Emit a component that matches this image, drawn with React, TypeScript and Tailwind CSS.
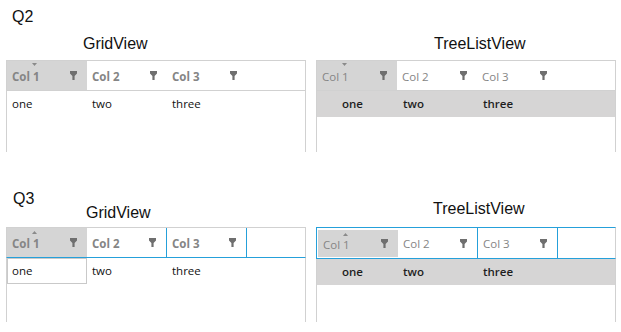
import React from 'react';

const SANS = "font-['Liberation_Sans',Arial,sans-serif]";
const UI = "font-['Open_Sans','Noto_Sans',sans-serif]";

type Kind = 'grid' | 'tree';

function Funnel() {
  return (
    <svg width="7" height="9" viewBox="0 0 7 9" className="shrink-0">
      <path d="M0 0H7V2.5L4.6 5V9H2.4V5L0 2.5Z" fill="#6f6f6f" />
    </svg>
  );
}

function SortArrow({ up }: { up: boolean }) {
  return (
    <svg
      width="5"
      height="3"
      viewBox="0 0 5 3"
      className={`absolute left-[25px] ${up ? 'top-[3px]' : 'top-[2px]'}`}
    >
      <path d={up ? 'M2.5 0L5 3H0Z' : 'M0 0H5L2.5 3Z'} fill="#8a8a8a" />
    </svg>
  );
}

function Header({ kind, focused }: { kind: Kind; focused: boolean }) {
  const cols = ['Col 1', 'Col 2', 'Col 3'];
  const weight = kind === 'grid' ? 'font-bold' : 'font-normal';

  let wrap = 'h-[31px] border border-[#d1d1d1]';
  if (focused && kind === 'grid') wrap = 'h-[31px] border-x border-t border-b border-x-[#d1d1d1] border-t-[#d1d1d1] border-b-[#25a0da]';
  if (focused && kind === 'tree') wrap = 'h-[32px] border pl-[1px] border-t-[#25a0da] border-l-[#25a0da] border-b-[#25a0da] border-r-[#d1d1d1]';

  return (
    <div className={`flex ${wrap}`}>
      {cols.map((c, i) => {
        const first = i === 0;
        const line = focused && !first ? 'border-r border-[#25a0da]' : '';
        const bg = first ? 'bg-[#d5d5d5]' : '';
        const inset = focused && kind === 'tree' && first ? 'mt-[2px] mb-[1px]' : '';
        return (
          <div
            key={c}
            className={`relative w-[80px] shrink-0 flex items-center justify-between pl-[5px] pr-[10px] ${bg} ${line} ${inset}`}
          >
            {first && <SortArrow up={focused} />}
            <span className={`${UI} text-[11.5px] ${weight} text-[#858585] pt-[2px]`}>{c}</span>
            <Funnel />
          </div>
        );
      })}
    </div>
  );
}

function Row({ kind, focused }: { kind: Kind; focused: boolean }) {
  const cells = ['one', 'two', 'three'];
  if (kind === 'tree') {
    return (
      <div className={`flex h-[26px] bg-[#d6d5d5] items-center ${UI} text-[11.5px] font-semibold text-[#1e1e1e]`}>
        <div className="w-[81px] shrink-0 pl-[25px]">{cells[0]}</div>
        <div className="w-[80px] shrink-0 pl-[5px]">{cells[1]}</div>
        <div className="w-[80px] shrink-0 pl-[5px]">{cells[2]}</div>
      </div>
    );
  }
  return (
    <div className={`flex h-[26px] ${UI} text-[11.5px] text-[#111]`}>
      {cells.map((c, i) => (
        <div
          key={c}
          className={`w-[80px] shrink-0 flex items-center ${
            focused && i === 0 ? 'border border-[#c9c9c9] pl-[4px]' : 'pl-[5px]'
          }`}
        >
          {c}
        </div>
      ))}
    </div>
  );
}

function Panel({
  kind,
  focused,
  titlePad,
  titleTop,
  boxHeight,
}: {
  kind: Kind;
  focused: boolean;
  titlePad: string;
  titleTop: string;
  boxHeight: string;
}) {
  return (
    <div className="w-[300px] flex flex-col">
      <div className={`${titlePad} ${titleTop} ${SANS} text-[16px] leading-[18px] text-[#111]`}>
        {kind === 'grid' ? 'GridView' : 'TreeListView'}
      </div>
      <div className={`flex flex-col ${boxHeight}`}>
        <Header kind={kind} focused={focused} />
        <div className="flex-1 border-x border-[#d1d1d1]">
          <Row kind={kind} focused={focused} />
        </div>
      </div>
    </div>
  );
}

export default function App() {
  return (
    <div className="w-[621px] h-[332px] bg-white overflow-hidden">
      {/* Q2 */}
      <div className="pt-[8px]">
        <div className={`pl-[12px] ${SANS} text-[16px] leading-[18px] text-[#111]`}>Q2</div>
        <div className="flex gap-[10px] pl-[6px] mt-[9px]">
          <Panel kind="grid" focused={false} titlePad="pl-[77px]" titleTop="h-[25px]" boxHeight="h-[92px]" />
          <Panel kind="tree" focused={false} titlePad="pl-[118px]" titleTop="h-[25px]" boxHeight="h-[92px]" />
        </div>
      </div>

      {/* Q3 */}
      <div className="mt-[38px]">
        <div className={`pl-[13px] ${SANS} text-[16px] leading-[18px] text-[#111]`}>Q3</div>
        <div className="flex gap-[10px] pl-[6px] -mt-[8px]">
          <Panel kind="grid" focused titlePad="pl-[80px]" titleTop="h-[27px] pt-[4px]" boxHeight="h-[95px]" />
          <Panel kind="tree" focused titlePad="pl-[117px]" titleTop="h-[27px]" boxHeight="h-[95px]" />
        </div>
      </div>
    </div>
  );
}
